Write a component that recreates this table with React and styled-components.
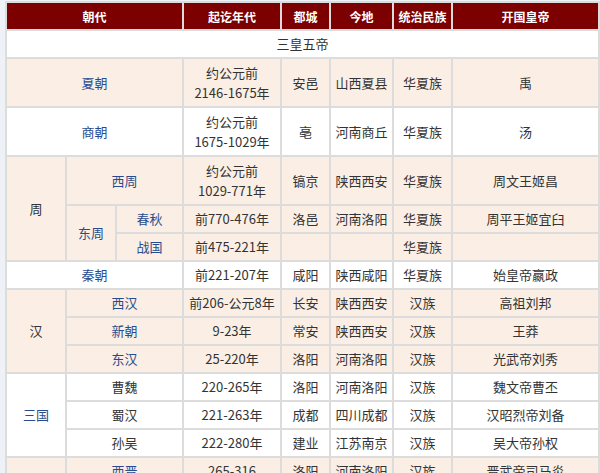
import styled, { createGlobalStyle } from "styled-components";

const GlobalStyle = createGlobalStyle`
  html, body {
    margin: 0;
    padding: 0;
    background: #eef1f5;
  }
  body {
    padding: 1px 0 0 5px;
    overflow: hidden;
    font-family: "Noto Sans CJK SC", "DejaVu Sans", sans-serif;
  }
`;

const Table = styled.table`
  width: 595px;
  table-layout: fixed;
  border-collapse: separate;
  border-spacing: 2px;
  background: #dcdcdc;
  font-size: 13px;
  color: #333;
`;

const Row = styled.tr`
  height: ${(p) => (p.$tall ? 47 : 26)}px;
  background: ${(p) => (p.$beige ? "#fbefe5" : "#ffffff")};
`;

const HeadCell = styled.th`
  background: #7d0000;
  color: #fff;
  font-size: 12px;
  font-weight: bold;
  height: 26px;
  padding: 0;
  text-align: center;
  vertical-align: middle;
`;

const Cell = styled.td`
  padding: 0;
  text-align: center;
  vertical-align: middle;
  line-height: 20px;
  white-space: nowrap;
  color: ${(p) => (p.$link ? "#294b8e" : "#333")};
`;

const Years = styled.span`
  display: block;
`;

const App = () => (
  <>
    <GlobalStyle />
    <Table>
      <colgroup>
        <col style={{ width: 58 }} />
        <col style={{ width: 48 }} />
        <col style={{ width: 65 }} />
        <col style={{ width: 96 }} />
        <col style={{ width: 47 }} />
        <col style={{ width: 61 }} />
        <col style={{ width: 57 }} />
        <col style={{ width: 145 }} />
      </colgroup>
      <thead>
        <tr>
          <HeadCell colSpan={3}>朝代</HeadCell>
          <HeadCell>起讫年代</HeadCell>
          <HeadCell>都城</HeadCell>
          <HeadCell>今地</HeadCell>
          <HeadCell>统治民族</HeadCell>
          <HeadCell>开国皇帝</HeadCell>
        </tr>
      </thead>
      <tbody>
        <Row>
          <Cell colSpan={8}>三皇五帝</Cell>
        </Row>
        <Row $tall $beige>
          <Cell colSpan={3} $link>夏朝</Cell>
          <Cell>约公元前<Years>2146-1675年</Years></Cell>
          <Cell>安邑</Cell>
          <Cell>山西夏县</Cell>
          <Cell>华夏族</Cell>
          <Cell>禹</Cell>
        </Row>
        <Row $tall>
          <Cell colSpan={3} $link>商朝</Cell>
          <Cell>约公元前<Years>1675-1029年</Years></Cell>
          <Cell>亳</Cell>
          <Cell>河南商丘</Cell>
          <Cell>华夏族</Cell>
          <Cell>汤</Cell>
        </Row>
        <Row $tall $beige>
          <Cell rowSpan={3}>周</Cell>
          <Cell colSpan={2} $link>西周</Cell>
          <Cell>约公元前<Years>1029-771年</Years></Cell>
          <Cell>镐京</Cell>
          <Cell>陕西西安</Cell>
          <Cell>华夏族</Cell>
          <Cell>周文王姬昌</Cell>
        </Row>
        <Row $beige>
          <Cell rowSpan={2} $link>东周</Cell>
          <Cell $link>春秋</Cell>
          <Cell>前770-476年</Cell>
          <Cell>洛邑</Cell>
          <Cell>河南洛阳</Cell>
          <Cell>华夏族</Cell>
          <Cell>周平王姬宜臼</Cell>
        </Row>
        <Row $beige>
          <Cell $link>战国</Cell>
          <Cell>前475-221年</Cell>
          <Cell />
          <Cell />
          <Cell>华夏族</Cell>
          <Cell />
        </Row>
        <Row>
          <Cell colSpan={3} $link>秦朝</Cell>
          <Cell>前221-207年</Cell>
          <Cell>咸阳</Cell>
          <Cell>陕西咸阳</Cell>
          <Cell>华夏族</Cell>
          <Cell>始皇帝嬴政</Cell>
        </Row>
        <Row $beige>
          <Cell rowSpan={3}>汉</Cell>
          <Cell colSpan={2} $link>西汉</Cell>
          <Cell>前206-公元8年</Cell>
          <Cell>长安</Cell>
          <Cell>陕西西安</Cell>
          <Cell>汉族</Cell>
          <Cell>高祖刘邦</Cell>
        </Row>
        <Row $beige>
          <Cell colSpan={2} $link>新朝</Cell>
          <Cell>9-23年</Cell>
          <Cell>常安</Cell>
          <Cell>陕西西安</Cell>
          <Cell>汉族</Cell>
          <Cell>王莽</Cell>
        </Row>
        <Row $beige>
          <Cell colSpan={2} $link>东汉</Cell>
          <Cell>25-220年</Cell>
          <Cell>洛阳</Cell>
          <Cell>河南洛阳</Cell>
          <Cell>汉族</Cell>
          <Cell>光武帝刘秀</Cell>
        </Row>
        <Row>
          <Cell rowSpan={3} $link>三国</Cell>
          <Cell colSpan={2}>曹魏</Cell>
          <Cell>220-265年</Cell>
          <Cell>洛阳</Cell>
          <Cell>河南洛阳</Cell>
          <Cell>汉族</Cell>
          <Cell>魏文帝曹丕</Cell>
        </Row>
        <Row>
          <Cell colSpan={2}>蜀汉</Cell>
          <Cell>221-263年</Cell>
          <Cell>成都</Cell>
          <Cell>四川成都</Cell>
          <Cell>汉族</Cell>
          <Cell>汉昭烈帝刘备</Cell>
        </Row>
        <Row>
          <Cell colSpan={2}>孙吴</Cell>
          <Cell>222-280年</Cell>
          <Cell>建业</Cell>
          <Cell>江苏南京</Cell>
          <Cell>汉族</Cell>
          <Cell>吴大帝孙权</Cell>
        </Row>
        <Row $beige>
          <Cell rowSpan={2}>晋</Cell>
          <Cell colSpan={2} $link>西晋</Cell>
          <Cell>265-316</Cell>
          <Cell>洛阳</Cell>
          <Cell>河南洛阳</Cell>
          <Cell>汉族</Cell>
          <Cell>晋武帝司马炎</Cell>
        </Row>
        <Row $beige>
          <Cell colSpan={2} $link>东晋</Cell>
          <Cell>317-420年</Cell>
          <Cell>建康</Cell>
          <Cell>江苏南京</Cell>
          <Cell>汉族</Cell>
          <Cell>晋元帝司马睿</Cell>
        </Row>
      </tbody>
    </Table>
  </>
);

export default App;
